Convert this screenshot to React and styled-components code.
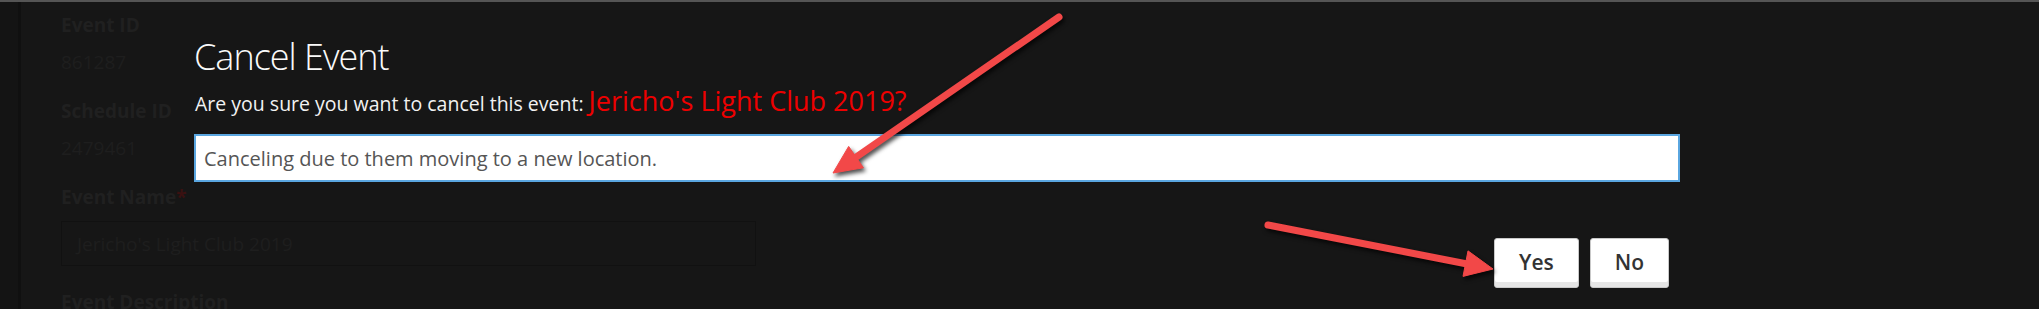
import React from 'react';
import styled, { createGlobalStyle } from 'styled-components';

const GlobalStyle = createGlobalStyle`
  html, body {
    margin: 0;
    padding: 0;
    height: 309px;
    overflow: hidden;
    background: #161616;
  }
  body {
    font-family: 'Open Sans', 'Noto Sans', sans-serif;
  }
`

const Page = styled.div`
  position: relative;
  height: 309px;
  overflow: hidden;
  background: #161616;
`

const TopBar = styled.div`
  height: 2px;
  background: #555;
`

const Main = styled.div`
  display: flex;
  height: 307px;
`

const Sidebar = styled.div`
  width: 18px;
  background: #141414;
  border-right: 3px solid #101010;
`

const Form = styled.div`
  flex: 1;
  padding: 10px 0 0 40px;
`

const Field = styled.div`
  margin-bottom: 23px;
`

const Label = styled.div`
  font-size: 19px;
  font-weight: 700;
  line-height: 26px;
  color: #202020;
  margin-bottom: 11px;
`

const Required = styled.span`
  color: #3a1111;
`

const Value = styled.div`
  font-size: 19px;
  line-height: 26px;
  color: #1e1e1e;
`

const DimInput = styled.div`
  width: 678px;
  height: 43px;
  padding-left: 15px;
  display: flex;
  align-items: center;
  border: 1px solid #111;
  font-size: 19px;
  color: #1e1e1e;
`

const Modal = styled.div`
  position: absolute;
  left: 194px;
  top: 32px;
  width: 1486px;
`

const Title = styled.h2`
  margin: 0;
  font-size: 36px;
  font-weight: 300;
  line-height: 50px;
  color: #fafafa;
  letter-spacing: -1px;
`

const Prompt = styled.p`
  margin: 4px 0 0 1px;
  font-size: 19.5px;
  line-height: 30px;
  color: #f2f2f2;
`

const EventName = styled.span`
  font-size: 27px;
  color: #ee0000;
`

const ReasonInput = styled.input`
  display: block;
  box-sizing: border-box;
  width: 100%;
  height: 48px;
  margin-top: 15px;
  padding: 0 8px;
  border: 2px solid #5aa6e0;
  background: #fff;
  font-family: 'Open Sans', 'Noto Sans', sans-serif;
  font-size: 20px;
  color: #555;
  outline: none;
`

const Actions = styled.div`
  display: flex;
  justify-content: flex-end;
  gap: 11px;
  margin-top: 56px;
  padding-right: 11px;
`

const Button = styled.button`
  box-sizing: border-box;
  height: 50px;
  padding: 0 ${p => p.$pad}px 2px;
  background: #fff;
  border: 1px solid #c9c9c9;
  border-radius: 3px;
  box-shadow: inset 0 -5px 0 #e6e6e6;
  font-family: 'Open Sans', 'Noto Sans', sans-serif;
  font-size: 21px;
  font-weight: 600;
  color: #333;
`

const Annotations = styled.svg`
  position: absolute;
  left: 0;
  top: 0;
  pointer-events: none;
  filter: drop-shadow(2px 3px 2px rgba(0, 0, 0, 0.7));
`

// callout arrow: tail -> tip, with a filled head
const Arrow = ({ x1, y1, x2, y2 }) => {
  const dx = x2 - x1
  const dy = y2 - y1
  const len = Math.hypot(dx, dy)
  const ux = dx / len
  const uy = dy / len
  const headLen = 28
  const half = 13
  const bx = x2 - ux * headLen
  const by = y2 - uy * headLen
  const pts = [
    `${x2},${y2}`,
    `${bx - uy * half},${by + ux * half}`,
    `${bx + uy * half},${by - ux * half}`,
  ].join(' ')
  return (
    <g fill="#f24848" stroke="#f24848">
      <line x1={x1} y1={y1} x2={bx + ux * 3} y2={by + uy * 3} strokeWidth="7" strokeLinecap="round" />
      <polygon points={pts} strokeWidth="1" strokeLinejoin="round" />
    </g>
  )
}

const App = () => (
  <>
    <GlobalStyle />
    <Page>
      <TopBar />
      <Main>
        <Sidebar />
        <Form>
          <Field>
            <Label>Event ID</Label>
            <Value>861287</Value>
          </Field>
          <Field>
            <Label>Schedule ID</Label>
            <Value>2479461</Value>
          </Field>
          <Field>
            <Label>Event Name<Required>*</Required></Label>
            <DimInput>Jericho's Light Club 2019</DimInput>
          </Field>
          <Field>
            <Label>Event Description</Label>
          </Field>
        </Form>
      </Main>

      <Modal>
        <Title>Cancel Event</Title>
        <Prompt>
          Are you sure you want to cancel this event: <EventName>Jericho's Light Club 2019?</EventName>
        </Prompt>
        <ReasonInput defaultValue="Canceling due to them moving to a new location." />
        <Actions>
          <Button $pad={24}>Yes</Button>
          <Button $pad={24}>No</Button>
        </Actions>
      </Modal>

      <Annotations width="2039" height="309" viewBox="0 0 2039 309">
        <Arrow x1={1059} y1={17} x2={833} y2={173} />
        <Arrow x1={1268} y1={225} x2={1493} y2={269} />
      </Annotations>
    </Page>
  </>
)

export default App;
